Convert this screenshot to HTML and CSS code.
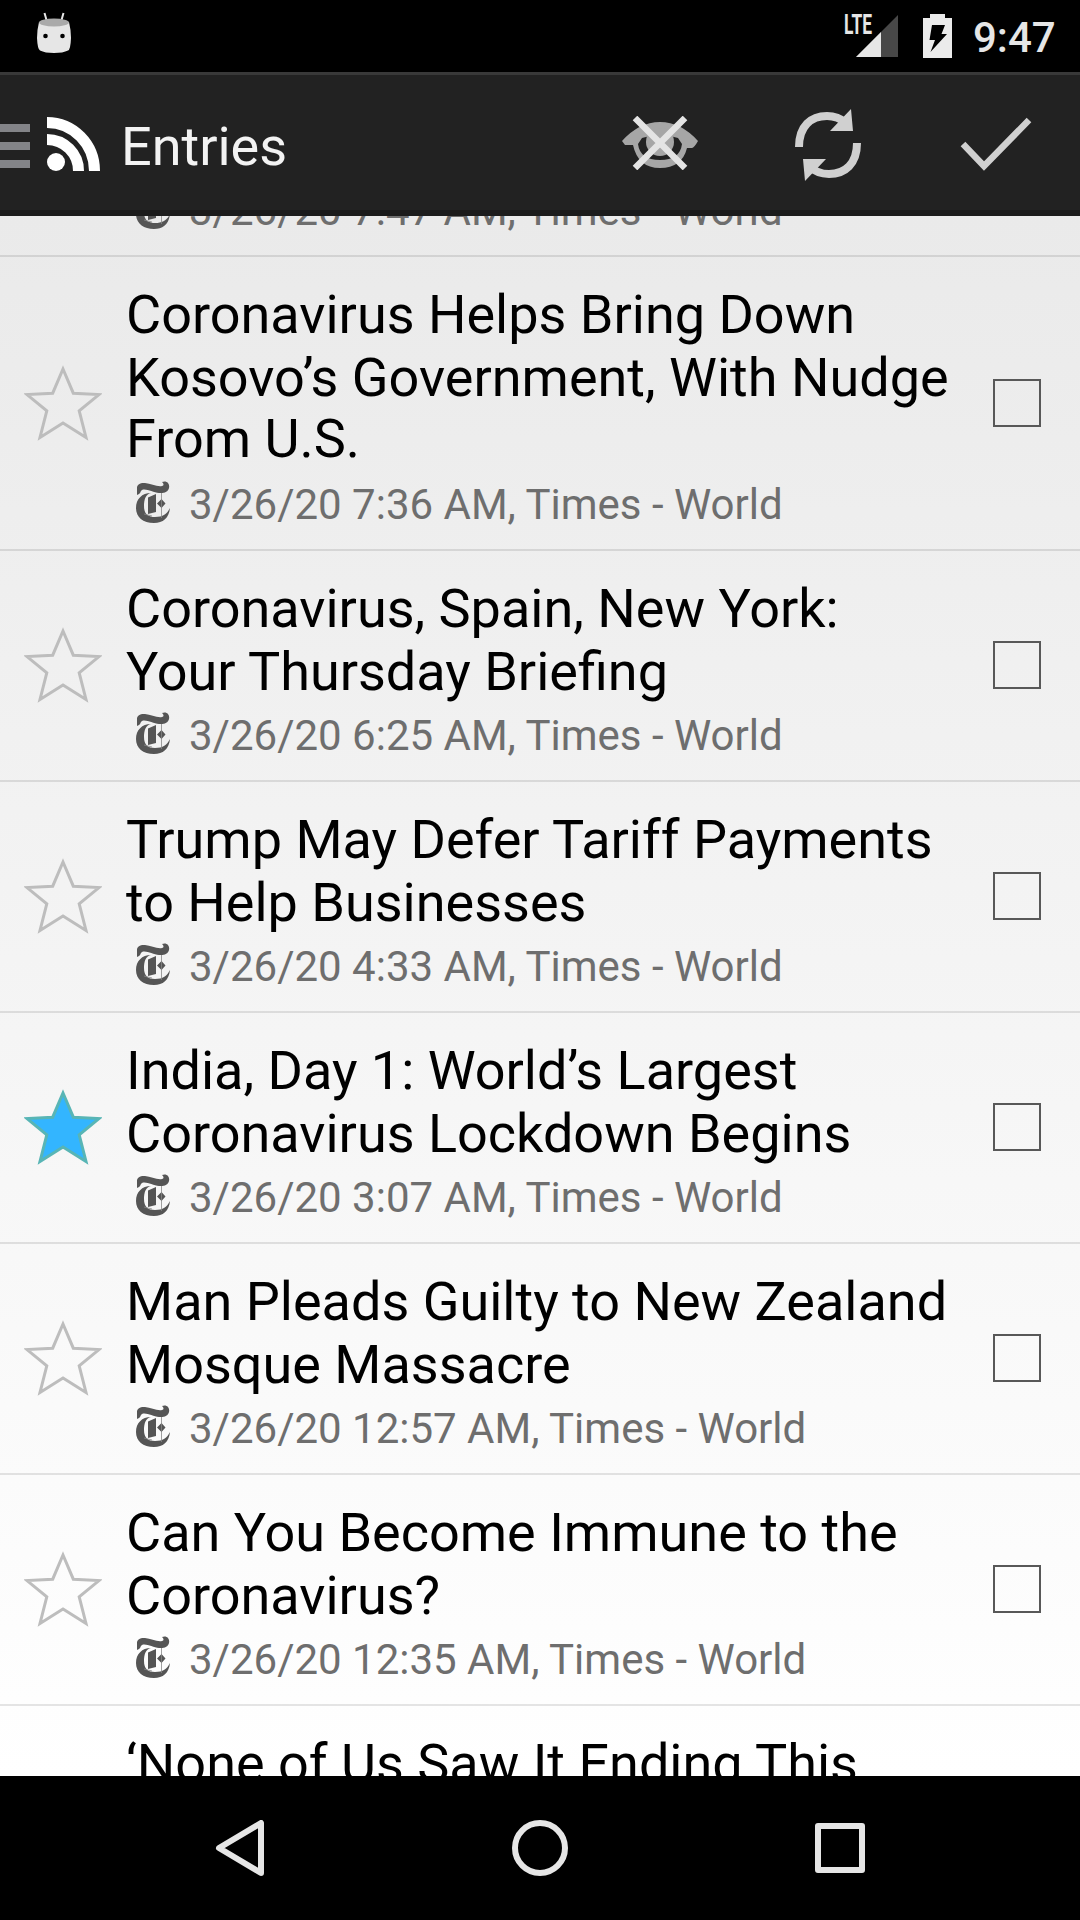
FILE: index.html
```html
<!DOCTYPE html>
<html lang="en">
<head>
<meta charset="utf-8">
<title>Entries</title>
<link rel="stylesheet" href="styles.css">
</head>
<body>
<svg class="defs" width="0" height="0" aria-hidden="true">
  <symbol id="star" viewBox="0 0 78 76"><path d="M39 4L49.3 28.2L75 29.6L55.2 45.8L62 72.5L39 58L16 72.5L22.8 45.8L3 29.6L28.7 28.2Z"/></symbol>
  <symbol id="paper" viewBox="0 0 34 42">
    <path d="M1 14V7C1 3 5 1.500 9 2C15 2.500 21 6 26 5C28 4.500 28 2.500 26 1C31-1 34 3 33 7C32 11 28 12.500 23 12C17 11.500 10 7 6 9C4 10 5 12 3 13Z"/>
    <path d="M15 12C10 13 8 18 8 25C8 33 12 36 19 36C27 36 31 33 34 27C33 37 27 42 18 42C7 42 0 36 0 27C0 18 6 12 15 12Z"/>
    <path d="M12 16.500L20 13V31L12 33ZM25.500 18L29.500 22.500L25.500 27L21 22.500Z"/>
    <path d="M25.500 12V37M8 33L16 35" fill="none" stroke="currentColor" stroke-width=".8"/>
  </symbol>
</svg>
<div class="screen">
  <header class="status">
    <svg class="droid" width="34" height="42" viewBox="0 0 34 42">
      <path d="M7.500 1L9.500 8M26.500 1L24.500 8" stroke="#e6e6e6" stroke-width="2"/>
      <path d="M2 10Q17 6 32 10Q34 18 34 26Q33.500 38 31 38.500Q26 41 17 41T3 38.500Q.5 37 0 26Q0 18 2 10Z" fill="#e6e6e6"/>
      <ellipse cx="17" cy="10.500" rx="15" ry="4" fill="#aaa"/>
      <circle cx="8.500" cy="24" r="2.300"/><circle cx="25.500" cy="24" r="2.300"/>
    </svg>
    <svg class="signal" width="54" height="44" viewBox="0 0 54 44">
      <path d="M53 1V43H11Z" fill="#484848"/><path d="M36 18V43H11Z" fill="#e6e6e6"/>
      <text x="-1" y="20" textLength="28" lengthAdjust="spacingAndGlyphs">LTE</text>
    </svg>
    <svg class="battery" width="29" height="44" viewBox="0 0 29 44">
      <path d="M7 0H22V4H29V44H0V4H7Z" fill="#ebebeb"/><path d="M9 11H22L18.500 20H24L7.500 38L12 26H6.500Z"/>
    </svg>
    <span class="clock">9:47</span>
  </header>
  <nav class="appbar">
    <svg class="menu" width="30" height="44"><path d="M0 4H30M0 22H30M0 40H30" stroke="#838488" stroke-width="8"/></svg>
    <svg class="rss" width="53" height="54" viewBox="0 0 53 54">
      <circle cx="9" cy="45" r="9" fill="#fff"/>
      <path d="M0 22.500A31.500 31.500 0 0 1 31.500 54M0 5.500A47.500 48.500 0 0 1 47.500 54" fill="none" stroke="#fff" stroke-width="11"/>
    </svg>
    <h1>Entries</h1>
    <svg class="eye" width="76" height="54" viewBox="0 0 76 54">
      <path fill="#a6a6a6" fill-rule="evenodd" d="M0 25Q17 6 38 6T76 25Q72 32 70 32H65Q60 52 38 52T11 29H3ZM16 28Q18 44 38 44T60 28L56 22L48 20H28L20 22Z"/>
      <circle cx="38" cy="26" r="14" fill="#a6a6a6"/>
      <path d="M13 2L63 52M63 2L13 52" stroke="#e4e4e4" stroke-width="6.500" fill="none"/>
    </svg>
    <svg class="sync" width="66" height="72" viewBox="0 0 66 72" fill="#d0d0d0">
      <path d="M4 38C4 17 16 7 32 7Q43 7 51 14M62 34C62 55 50 65 34 65Q22 65 14 57" fill="none" stroke="#d0d0d0" stroke-width="8"/>
      <path d="M56 0L58 22H35ZM10 72L8 50H31Z"/>
    </svg>
    <svg class="check" width="72" height="54" viewBox="0 0 72 54"><path d="M3 27L24 49L69 3" fill="none" stroke="#d0d0d0" stroke-width="6.500"/></svg>
  </nav>
  <main class="list">
    <article class="row partial">
      <div class="text"><p class="meta"><svg class="ico"><use href="#paper"/></svg>3/26/20 7:47 AM, Times - World</p></div>
    </article>
    <article class="row">
      <svg class="star"><use href="#star"/></svg>
      <div class="text"><h2>Coronavirus Helps Bring Down<br>Kosovo’s Government, With Nudge<span class="third">From U.S.</span></h2><p class="meta"><svg class="ico"><use href="#paper"/></svg>3/26/20 7:36 AM, Times - World</p></div>
      <span class="box"></span>
    </article>
    <article class="row">
      <svg class="star"><use href="#star"/></svg>
      <div class="text"><h2>Coronavirus, Spain, New York:<br>Your Thursday Briefing</h2><p class="meta"><svg class="ico"><use href="#paper"/></svg>3/26/20 6:25 AM, Times - World</p></div>
      <span class="box"></span>
    </article>
    <article class="row">
      <svg class="star"><use href="#star"/></svg>
      <div class="text"><h2>Trump May Defer Tariff Payments<br>to Help Businesses</h2><p class="meta"><svg class="ico"><use href="#paper"/></svg>3/26/20 4:33 AM, Times - World</p></div>
      <span class="box"></span>
    </article>
    <article class="row">
      <svg class="star on"><use href="#star"/></svg>
      <div class="text"><h2>India, Day 1: World’s Largest<br>Coronavirus Lockdown Begins</h2><p class="meta"><svg class="ico"><use href="#paper"/></svg>3/26/20 3:07 AM, Times - World</p></div>
      <span class="box"></span>
    </article>
    <article class="row">
      <svg class="star"><use href="#star"/></svg>
      <div class="text"><h2>Man Pleads Guilty to New Zealand<br>Mosque Massacre</h2><p class="meta"><svg class="ico"><use href="#paper"/></svg>3/26/20 12:57 AM, Times - World</p></div>
      <span class="box"></span>
    </article>
    <article class="row">
      <svg class="star"><use href="#star"/></svg>
      <div class="text"><h2>Can You Become Immune to the<br>Coronavirus?</h2><p class="meta"><svg class="ico"><use href="#paper"/></svg>3/26/20 12:35 AM, Times - World</p></div>
      <span class="box"></span>
    </article>
    <article class="row last">
      <div class="text"><h2>‘None of Us Saw It Ending This</h2></div>
    </article>
  </main>
  <footer class="navbar">
    <svg width="56" height="56" viewBox="0 0 56 56"><path d="M7 28L49 3V53Z"/></svg>
    <svg width="56" height="56" viewBox="0 0 56 56"><circle cx="28" cy="28" r="25"/></svg>
    <svg width="56" height="56" viewBox="0 0 56 56"><rect x="6" y="6" width="44" height="44"/></svg>
  </footer>
</div>
</body>
</html>
```
FILE: styles.css
```css
* { box-sizing: border-box; margin: 0; padding: 0; }
body { font-family: Roboto, sans-serif; background: #000; }
svg { display: block; flex: none; }
.defs { height: 0; }
.screen { width: 1080px; height: 1920px; display: flex; flex-direction: column; overflow: hidden; }

.status { height: 72px; flex: none; background: #000; display: flex; align-items: flex-start; padding: 0 24px 0 37px; }
.droid { margin-top: 12px; }
.signal { margin: 14px 0 0 auto; overflow: visible; }
.signal text { font-size: 27px; font-weight: 700; fill: #e6e6e6; }
.battery { margin: 14px 0 0 24px; }
.clock { width: 83px; margin-left: 21px; line-height: 49px; padding-top: 13px; font-size: 42px; font-weight: 500; color: #e6e6e6; white-space: nowrap; }

.appbar { height: 144px; flex: none; background: #222; border-top: 3px solid #393939; border-bottom: 6px solid #1b1b1b; display: flex; align-items: flex-start; }
.menu { margin-top: 49px; }
.rss { margin: 42px 0 0 17px; }
.appbar h1 { width: 501px; margin: 40px 0 0 21px; font-size: 54px; line-height: 63px; font-weight: 400; color: #f3f3f3; }
.eye { margin: 41px 0 0 0; }
.sync { margin: 34px 0 0 97px; }
.check { margin: 42px 0 0 99px; }

.list { flex: 1; min-height: 0; overflow: hidden; background: linear-gradient(#eaeaea, #fff); }
.row { display: flex; align-items: center; border-bottom: 2px solid rgba(0, 0, 0, .1); padding-right: 39px; }
.star { width: 78px; height: 76px; margin: 0 24px 1px; fill: none; stroke: #bdbdbd; stroke-width: 3; }
.star.on { fill: #33b5ff; stroke: #58b5b5; }
.text { flex: 1; padding: 26px 0 20px; }
.text h2 { font-size: 54px; line-height: 63px; font-weight: 400; color: #000; white-space: nowrap; }
.third { display: block; margin-top: -2px; padding-bottom: 2px; }
.meta { display: flex; align-items: flex-start; margin-top: 8px; font-size: 42px; line-height: 49px; color: #6e6e6e; white-space: nowrap; }
.ico { width: 34px; height: 42px; margin: 1px 19px 0 10px; fill: #555; color: #888; }
.box { width: 48px; height: 48px; margin-bottom: 1px; border: 2px solid #585858; flex: none; }
.partial { height: 41px; align-items: flex-end; padding-left: 126px; overflow: hidden; }
.last { padding-left: 126px; }

.navbar { height: 144px; flex: none; background: #000; display: flex; align-items: center; justify-content: center; gap: 244px; fill: none; stroke: #e6e6e6; stroke-width: 6; stroke-linejoin: round; }
```
